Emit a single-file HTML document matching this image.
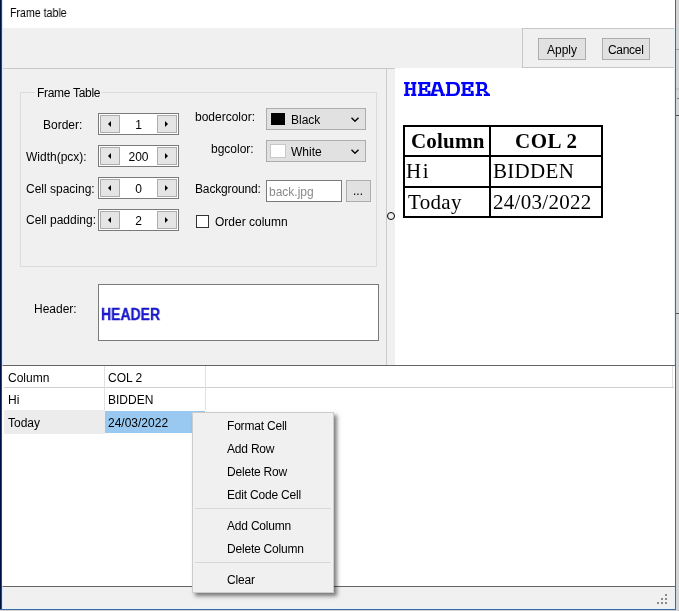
<!DOCTYPE html>
<html><head><meta charset="utf-8">
<style>
*{box-sizing:border-box;margin:0;padding:0}
html,body{width:679px;height:611px;overflow:hidden;background:#f0f0f0;position:relative;font-family:"Liberation Sans",sans-serif;font-size:12px;color:#000}
.a{position:absolute}
.t{position:absolute;white-space:nowrap;line-height:16px;height:16px;will-change:transform}
.spin{position:absolute;left:98px;width:81px;height:22px;border:1px solid #7a7a7a;background:#fff}
.sb{position:absolute;top:1px;width:20px;height:18px;border:1px solid #adadad;background:#e5e5e5}
.sb.l{left:1px}.sb.r{left:58px}
.tri{position:absolute;top:4.5px;width:0;height:0;border-top:3.5px solid transparent;border-bottom:3.5px solid transparent}
.sb.l .tri{left:7px;border-right:3.5px solid #000}
.sb.r .tri{left:7px;border-left:3.5px solid #000}
.sv{position:absolute;left:20px;width:39px;top:3px;text-align:center;line-height:16px;will-change:transform}
.combo{position:absolute;left:266px;width:100px;height:22px;border:1px solid #adadad;background:#e1e1e1}
.sw{position:absolute;left:4px;top:4px;width:14px;height:12px}
.chev{position:absolute;left:83px;top:7px}
.menu .t{left:34px;letter-spacing:-0.2px}
</style></head><body>
<!-- window frame -->
<div class="a" style="left:0;top:0;width:1px;height:611px;background:#001040"></div><div class="a" style="left:1px;top:0;width:1px;height:611px;background:#1d4a80"></div>
<div class="a" style="left:2px;top:0;width:1px;height:611px;background:#d7ecfa"></div>
<div class="a" style="left:675px;top:0;width:1px;height:611px;background:#41699b"></div>
<div class="a" style="left:674px;top:0;width:1px;height:611px;background:#e3f3fc"></div>
<div class="a" style="left:676px;top:0;width:3px;height:611px;background:#d4d4d4"></div>
<div class="a" style="left:676px;top:49px;width:3px;height:1px;background:#a0a0a0"></div>
<div class="a" style="left:676px;top:88px;width:3px;height:2px;background:#c4c4c4"></div>
<div class="a" style="left:677px;top:98px;width:2px;height:1px;background:#808080"></div>
<div class="a" style="left:676px;top:115px;width:3px;height:1px;background:#505050"></div>
<div class="a" style="left:676px;top:313px;width:3px;height:1px;background:#5a5a5a"></div>
<!-- title bar -->
<div class="a" style="left:3px;top:0;width:672px;height:28px;background:#fff"></div>
<div class="t" style="left:10px;top:5px;transform:scaleX(0.885);transform-origin:0 0">Frame table</div>
<!-- button panel -->
<div class="a" style="left:522px;top:28px;width:152px;height:40px;border:1px solid #c7c7c7;border-right:none;background:#f0f0f0"></div>
<div class="a" style="left:538px;top:38px;width:48px;height:22px;border:1px solid #adadad;background:#e1e1e1"></div>
<div class="t" style="left:547px;top:42px">Apply</div>
<div class="a" style="left:602px;top:38px;width:48px;height:22px;border:1px solid #adadad;background:#e1e1e1"></div>
<div class="t" style="left:608px;top:42px;letter-spacing:-0.3px">Cancel</div>
<!-- split container -->
<div class="a" style="left:3px;top:68px;width:392px;height:1px;background:#c8c8c8"></div>
<div class="a" style="left:386px;top:68px;width:1px;height:297px;background:#cbcbcb"></div>
<div class="a" style="left:395px;top:68px;width:279px;height:297px;background:#fff"></div>
<!-- group box -->
<div class="a" style="left:20px;top:92px;width:357px;height:175px;border:1px solid #dcdcdc"></div>
<div class="t" style="left:35px;top:85px;padding:0 2px;background:#f0f0f0;letter-spacing:-0.3px">Frame Table</div>

<div class="t" style="left:43px;top:117px">Border:</div>
<div class="spin" style="top:113px"><div class="sb l"><div class="tri"></div></div><div class="sv">1</div><div class="sb r"><div class="tri"></div></div></div>
<div class="t" style="left:26px;top:149px">Width(pcx):</div>
<div class="spin" style="top:145px"><div class="sb l"><div class="tri"></div></div><div class="sv">200</div><div class="sb r"><div class="tri"></div></div></div>
<div class="t" style="left:26px;top:181px">Cell spacing:</div>
<div class="spin" style="top:177px"><div class="sb l"><div class="tri"></div></div><div class="sv">0</div><div class="sb r"><div class="tri"></div></div></div>
<div class="t" style="left:26px;top:212px">Cell padding:</div>
<div class="spin" style="top:209px"><div class="sb l"><div class="tri"></div></div><div class="sv">2</div><div class="sb r"><div class="tri"></div></div></div>

<div class="t" style="left:195px;top:109px">bodercolor:</div>
<div class="combo" style="top:108px"><div class="sw" style="background:#000"></div><div class="t" style="left:24px;top:3px">Black</div>
<svg class="chev" width="10" height="6" viewBox="0 0 10 6"><path d="M1.5 1.7 L5 5.2 L8.5 1.7" fill="none" stroke="#000" stroke-width="1.4"/></svg></div>
<div class="t" style="left:211px;top:141px">bgcolor:</div>
<div class="combo" style="top:140px"><div class="sw" style="background:#fff;border:1px solid #c8c8c8;left:3px;top:3px;width:16px;height:14px"></div><div class="t" style="left:24px;top:3px">White</div>
<svg class="chev" width="10" height="6" viewBox="0 0 10 6"><path d="M1.5 1.7 L5 5.2 L8.5 1.7" fill="none" stroke="#000" stroke-width="1.4"/></svg></div>

<div class="t" style="left:194.5px;top:181px;letter-spacing:-0.15px">Background:</div>
<div class="a" style="left:266px;top:180px;width:76px;height:22px;border:1px solid #7a7a7a;background:#fff"></div>
<div class="t" style="left:269px;top:184px;color:#8a8a8a">back.jpg</div>
<div class="a" style="left:346px;top:180px;width:25px;height:22px;border:1px solid #adadad;background:#e1e1e1"></div>
<div class="t" style="left:353px;top:183px">...</div>
<div class="a" style="left:196px;top:215px;width:13px;height:13px;border:1px solid #333;background:#fff"></div>
<div class="t" style="left:215px;top:214px">Order column</div>

<div class="t" style="left:34px;top:301px">Header:</div>
<div class="a" style="left:98px;top:284px;width:281px;height:57px;border:1px solid #7a7a7a;background:#fff"></div>
<div class="t" style="left:101px;top:306px;color:#1818c8;font-weight:bold;font-size:16px;line-height:18px;height:18px;transform:scaleX(0.875);-webkit-text-stroke:0.3px #1818c8;transform-origin:0 0">HEADER</div>

<!-- preview -->
<svg class="a" style="left:404px;top:82px" width="90" height="16" viewBox="0 0 90 16"><g fill="#0000ff">
<rect x="0.1" y="0" width="5.5" height="2.2"/><rect x="7.2" y="0" width="5.1" height="2.2"/>
<rect x="1.4" y="0" width="2.8" height="14"/><rect x="8.5" y="0" width="2.8" height="14"/>
<rect x="4.2" y="6" width="4.3" height="2"/>
<rect x="0.1" y="11.8" width="5.5" height="2.2"/><rect x="7.2" y="11.8" width="5.1" height="2.2"/>
<g id="E"><rect x="14" y="0" width="12.2" height="2.2"/><rect x="15.4" y="0" width="2.8" height="14"/>
<rect x="23.3" y="0" width="2.8" height="5"/><rect x="18" y="6" width="4.5" height="2"/>
<rect x="21.3" y="4" width="2" height="5.8"/><rect x="14" y="11.8" width="12.5" height="2.2"/>
<rect x="23.6" y="8.8" width="2.8" height="5"/></g>
<polygon points="30.3,0 33.2,0 29.9,12 27.1,12"/><polygon points="32.8,0 35.8,0 39.9,12 36.8,12"/>
<rect x="30.3" y="0" width="5.5" height="2.2"/><rect x="29" y="7.6" width="9.2" height="1.9"/>
<rect x="26.5" y="11.8" width="6.8" height="2.2"/><rect x="36.8" y="11.8" width="4.1" height="2.2"/>
<rect x="41.8" y="0" width="9" height="2.2"/><rect x="43.2" y="0" width="2.8" height="14"/>
<rect x="41.8" y="11.8" width="9" height="2.2"/>
<path d="M50,0 C54.6,0 56,3.6 56,7 C56,10.4 54.6,14 50,14 L50,11.8 C52.4,11.8 53.1,9.6 53.1,7 C53.1,4.4 52.4,2.2 50,2.2 Z"/>
<use href="#E" x="43.2"/>
<rect x="71.6" y="0" width="8" height="2.2"/><rect x="73.2" y="0" width="2.8" height="14"/>
<path d="M79,0 C82,0 83.2,2.2 83.2,4.5 C83.2,6.8 82,9 79,9 L76,9 L76,7 L78.8,7 C80,7 80.4,5.8 80.4,4.5 C80.4,3.2 80,2.2 78.8,2.2 Z"/>
<polygon points="78.6,8.4 81.4,8.2 85.6,12.2 82.6,12.2"/>
<rect x="71.6" y="11.8" width="6.4" height="2.2"/><rect x="79.8" y="11.8" width="6.2" height="2.2"/>
</g></svg>
<div class="a" style="left:403px;top:125px;width:200px;height:93px;border:2px solid #000;background:#fff"></div>
<div class="a" style="left:489px;top:125px;width:2px;height:93px;background:#000"></div>
<div class="a" style="left:403px;top:155px;width:200px;height:2px;background:#000"></div>
<div class="a" style="left:403px;top:186px;width:200px;height:2px;background:#000"></div>
<div class="t" style="left:410.5px;top:130px;font-family:'Liberation Serif',serif;font-weight:bold;font-size:21px;line-height:22px;height:22px;letter-spacing:0.2px">Column</div>
<div class="t" style="left:515px;top:130px;font-family:'Liberation Serif',serif;font-weight:bold;font-size:21px;line-height:22px;height:22px;letter-spacing:0.5px">COL 2</div>
<div class="t" style="left:406px;top:160px;font-family:'Liberation Serif',serif;font-size:21px;line-height:22px;height:22px;letter-spacing:1.5px">Hi</div>
<div class="t" style="left:493px;top:160px;font-family:'Liberation Serif',serif;font-size:21px;line-height:22px;height:22px;letter-spacing:0.3px">BIDDEN</div>
<div class="t" style="left:407.5px;top:191px;font-family:'Liberation Serif',serif;font-size:21px;line-height:22px;height:22px;letter-spacing:0.3px">Today</div>
<div class="t" style="left:493px;top:191px;font-family:'Liberation Serif',serif;font-size:21px;line-height:22px;height:22px;letter-spacing:0.3px">24/03/2022</div>
<!-- splitter grip -->
<svg class="a" style="left:386px;top:211px" width="10" height="10" viewBox="0 0 10 10"><circle cx="5" cy="5" r="3.5" fill="#f0f0f0" stroke="#000" stroke-width="1"/></svg>

<!-- grid -->
<div class="a" style="left:2px;top:365px;width:673px;height:222px;border-top:1px solid #646464;border-left:1px solid #fafafa;border-bottom:1px solid #646464;background:#fff"></div>
<div class="a" style="left:4px;top:387px;width:670px;height:1px;background:#d0d0d0"></div>
<div class="a" style="left:104px;top:366px;width:1px;height:44px;background:#e0e0e0"></div>
<div class="a" style="left:205px;top:366px;width:1px;height:44px;background:#e0e0e0"></div>
<div class="a" style="left:672px;top:366px;width:1px;height:21px;background:#e0e0e0"></div>
<div class="a" style="left:4px;top:410px;width:101px;height:24px;background:#ececec"></div>
<div class="a" style="left:105px;top:411px;width:100px;height:22px;background:#99c9f1"></div>
<div class="t" style="left:8px;top:370px">Column</div>
<div class="t" style="left:108px;top:370px">COL 2</div>
<div class="t" style="left:8px;top:392px">Hi</div>
<div class="t" style="left:108px;top:392px">BIDDEN</div>
<div class="t" style="left:8px;top:415px">Today</div>
<div class="t" style="left:108px;top:415px">24/03/2022</div>
<!-- status strip -->
<div class="a" style="left:3px;top:587px;width:671px;height:21px;background:#f0f0f0"></div>
<div class="a" style="left:3px;top:608px;width:672px;height:1px;background:#e3f3fc"></div>
<div class="a" style="left:0;top:609px;width:676px;height:1px;background:#41699b"></div>
<div class="a" style="left:0;top:610px;width:679px;height:1px;background:#d4d4d4"></div>
<svg class="a" style="left:656px;top:593px" width="12" height="12">
<rect x="9" y="1" width="2" height="2" fill="#8a8a8a"/>
<rect x="5" y="5" width="2" height="2" fill="#8a8a8a"/><rect x="9" y="5" width="2" height="2" fill="#8a8a8a"/>
<rect x="1" y="9" width="2" height="2" fill="#8a8a8a"/><rect x="5" y="9" width="2" height="2" fill="#8a8a8a"/><rect x="9" y="9" width="2" height="2" fill="#8a8a8a"/>
</svg>

<!-- context menu -->

<div class="a menu" style="left:192px;top:412px;width:142px;height:181px;border:1px solid #cccccc;background:#f0f0f0;box-shadow:3px 3px 4px rgba(0,0,0,0.5)">
<div class="t" style="top:5px">Format Cell</div>
<div class="t" style="top:28px">Add Row</div>
<div class="t" style="top:51px">Delete Row</div>
<div class="t" style="top:74px">Edit Code Cell</div>
<div class="a" style="left:2px;top:95px;width:136px;height:1px;background:#d7d7d7"></div>
<div class="t" style="top:105px">Add Column</div>
<div class="t" style="top:128px">Delete Column</div>
<div class="a" style="left:2px;top:149px;width:136px;height:1px;background:#d7d7d7"></div>
<div class="t" style="top:159px">Clear</div>
</div>
</body></html>
